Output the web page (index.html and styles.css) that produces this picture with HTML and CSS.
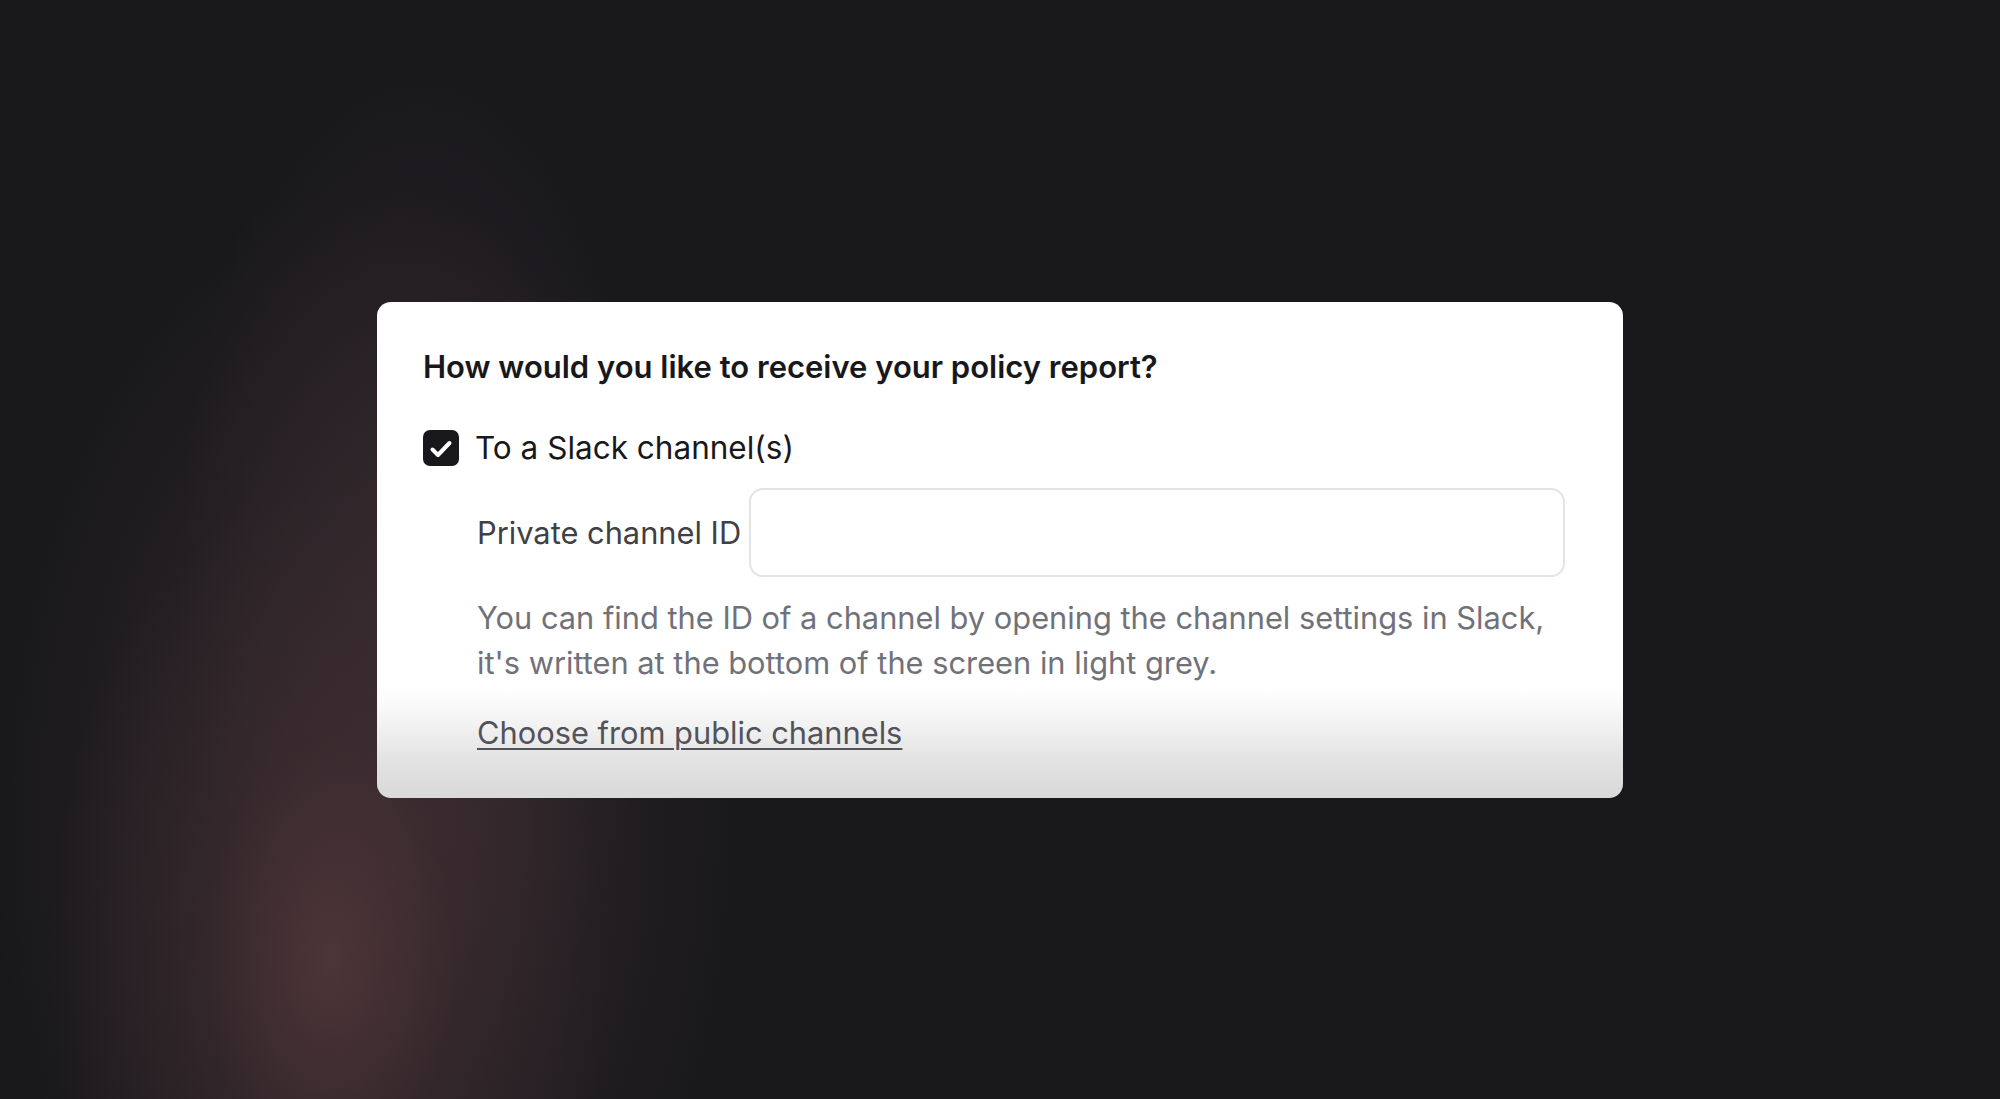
FILE: index.html
```html
<!DOCTYPE html>
<html lang="en">
<head>
<meta charset="utf-8">
<title>Policy report</title>
<link rel="stylesheet" href="styles.css">
</head>
<body>
<div class="stage">
  <section class="card">
    <h2 class="title">How would you like to receive your policy report?</h2>
    <label class="check-row">
      <span class="checkbox">
        <svg viewBox="0 0 36 36" width="36" height="36" aria-hidden="true">
          <path d="M9.5 19.5 L15 25 L26.5 13" fill="none" stroke="#fff" stroke-width="4" stroke-linecap="round" stroke-linejoin="round"/>
        </svg>
      </span>
      <span class="check-label">To a Slack channel(s)</span>
    </label>
    <div class="sub">
      <div class="field">
        <span class="field-label">Private channel ID</span>
        <span class="input"></span>
      </div>
      <p class="help">You can find the ID of a channel by opening the channel settings in Slack,<br>it's written at the bottom of the screen in light grey.</p>
      <a class="link" href="#">Choose from public channels</a>
    </div>
  </section>
</div>
</body>
</html>
```

FILE: styles.css
```css
html, body {
  margin: 0;
  padding: 0;
  height: 100%;
}
body {
  background-color: #18181b;
  background-image:
    radial-gradient(ellipse 280px 480px at 330px 960px, rgba(80, 54, 58, 0.9) 0%, rgba(62, 44, 48, 0.5) 45%, rgba(24, 24, 27, 0) 100%),
    radial-gradient(ellipse 380px 640px at 370px 820px, rgba(72, 52, 58, 0.6) 0%, rgba(24, 24, 27, 0) 100%),
    radial-gradient(ellipse 240px 520px at 420px 560px, rgba(62, 46, 52, 0.5) 0%, rgba(24, 24, 27, 0) 100%);
  font-family: Inter, "Noto Sans", sans-serif;
  overflow: hidden;
}
.stage {
  height: 1099px;
  display: flex;
  align-items: flex-start;
  padding-top: 302px;
  padding-left: 377px;
  box-sizing: border-box;
}
.card {
  width: 1246px;
  height: 496px;
  box-sizing: border-box;
  border-radius: 14px;
  padding: 45px 46px 0 46px;
  background: linear-gradient(to bottom, #ffffff 0, #ffffff 386px, #f3f3f3 420px, #e2e2e3 460px, #d9d9da 496px);
}
.title {
  margin: 0;
  font-size: 31px;
  line-height: 40px;
  font-weight: 600;
  color: #18181b;
}
.check-row {
  display: flex;
  align-items: center;
  gap: 16px;
  margin-top: 43px;
  height: 36px;
}
.checkbox {
  width: 36px;
  height: 36px;
  border-radius: 7px;
  background: #18181b;
  display: block;
  flex: none;
}
.checkbox svg {
  display: block;
}
.check-label {
  font-size: 31.5px;
  line-height: 36px;
  color: #18181b;
}
.sub {
  margin-left: 54px;
  margin-right: 12px;
  padding-top: 22px;
}
.field {
  display: flex;
  align-items: center;
  gap: 8px;
}
.field-label {
  font-size: 30.8px;
  color: #3f3f46;
  white-space: nowrap;
}
.input {
  flex: 1;
  height: 89px;
  box-sizing: border-box;
  border: 2px solid #e4e4e7;
  border-radius: 14px;
  background: #fff;
}
.help {
  margin: 18px 0 0 0;
  font-size: 30.8px;
  line-height: 45px;
  color: #71717a;
}
.link {
  display: inline-block;
  margin-top: 25px;
  font-size: 30.8px;
  line-height: 45px;
  color: #52525b;
  text-decoration: underline;
  text-underline-offset: 4px;
  text-decoration-thickness: 2px;
}
```
